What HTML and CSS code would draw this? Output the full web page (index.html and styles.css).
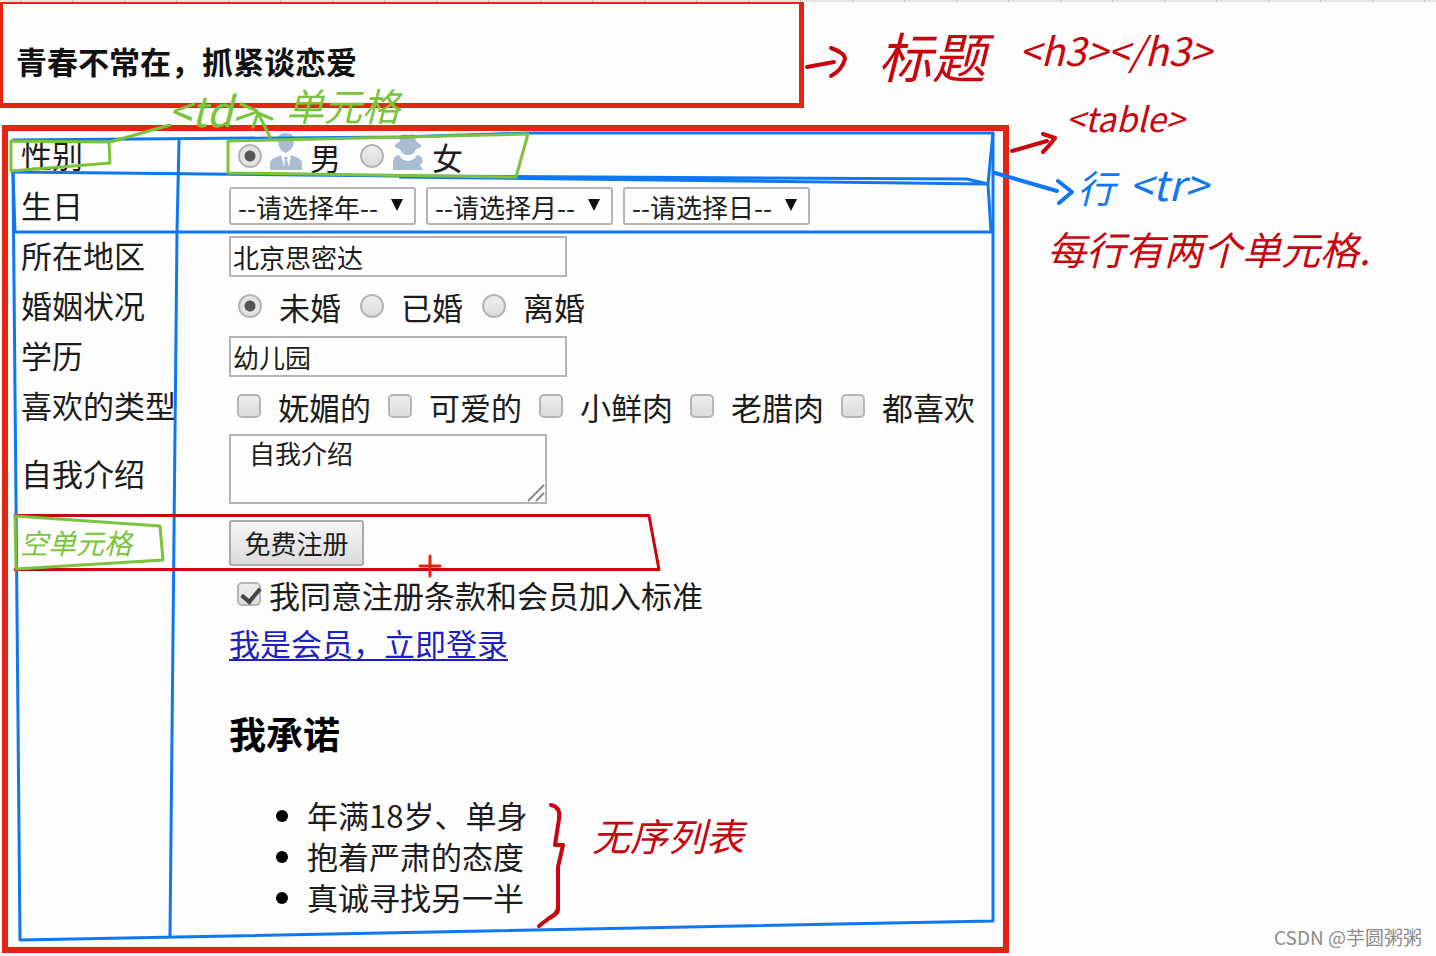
FILE: index.html
```
<!DOCTYPE html>
<html lang="zh-CN">
<head>
<meta charset="utf-8">
<title>青春不常在，抓紧谈恋爱</title>
<link rel="stylesheet" href="styles.css">
</head>
<body>
<div class="ruler"></div>
<header class="title-box"><h3 class="title">青春不常在，抓紧谈恋爱</h3></header>
<main class="sheet">
<form>
<table class="form-table">
<tr class="row">
  <td class="name">性别</td>
  <td class="field"><div class="options">
    <label class="option with-icon"><input class="radio" type="radio" name="sex" checked>
      <svg class="person" viewBox="0 0 32 38" aria-hidden="true"><path d="M8 5Q9 0 16 0Q24 0 24 7Q24 14 19 18L16 20L12 18Q8 14 8 5Z"/><path d="M0 37V31Q0 26 7 24L11 22L14 34L15 27L14 24H18L17 27L19 34L21 22L26 24Q32 26 32 31V37Z"/></svg>男</label>
    <label class="option with-icon"><input class="radio" type="radio" name="sex">
      <svg class="person" viewBox="0 0 32 38" aria-hidden="true"><path d="M8 8Q8 1 13 1Q16 3 19 1Q23 0 24 8L29 12Q30 15 24 16Q22 22 16 22Q10 22 8 16Q2 15 3 12Z"/><path d="M1 37V29Q1 23 7 22Q10 28 16 28Q22 28 25 22Q31 23 31 29L28 32L31 37Z"/></svg>女</label>
  </div></td>
</tr>
<tr class="row">
  <td class="name">生日</td>
  <td class="field"><div class="selects">
    <span class="pick"><select aria-label="年"><option>--请选择年--</option></select></span>
    <span class="pick"><select aria-label="月"><option>--请选择月--</option></select></span>
    <span class="pick"><select aria-label="日"><option>--请选择日--</option></select></span>
  </div></td>
</tr>
<tr class="row">
  <td class="name"><label for="area">所在地区</label></td>
  <td class="field"><input class="text" id="area" type="text" value="北京思密达"></td>
</tr>
<tr class="row">
  <td class="name">婚姻状况</td>
  <td class="field"><div class="options">
    <label class="option"><input class="radio" type="radio" name="marriage" checked>未婚</label>
    <label class="option"><input class="radio" type="radio" name="marriage">已婚</label>
    <label class="option"><input class="radio" type="radio" name="marriage">离婚</label>
  </div></td>
</tr>
<tr class="row">
  <td class="name"><label for="edu">学历</label></td>
  <td class="field"><input class="text" id="edu" type="text" value="幼儿园"></td>
</tr>
<tr class="row">
  <td class="name">喜欢的类型</td>
  <td class="field"><div class="options checks">
    <label class="option"><input class="check" type="checkbox">妩媚的</label>
    <label class="option"><input class="check" type="checkbox">可爱的</label>
    <label class="option"><input class="check" type="checkbox">小鲜肉</label>
    <label class="option"><input class="check" type="checkbox">老腊肉</label>
    <label class="option"><input class="check" type="checkbox">都喜欢</label>
  </div></td>
</tr>
<tr class="row tall">
  <td class="name"><label for="intro">自我介绍</label></td>
  <td class="field"><div class="area"><textarea id="intro">自我介绍</textarea><svg class="grip" viewBox="0 0 18 18" aria-hidden="true"><path d="M1 17L17 1M9 17L17 9"/></svg></div></td>
</tr>
<tr class="row">
  <td class="name"></td>
  <td class="field action"><button class="submit" type="button">免费注册</button></td>
</tr>
<tr class="row">
  <td class="name"></td>
  <td class="field"><div class="options checks"><label class="option agree"><input class="check" type="checkbox" checked>我同意注册条款和会员加入标准</label></div></td>
</tr>
<tr class="row">
  <td class="name"></td>
  <td class="field link-cell"><a class="login" href="#">我是会员，立即登录</a></td>
</tr>
<tr>
  <td class="name"></td>
  <td class="field">
    <h3 class="promise">我承诺</h3>
    <ul class="promises"><li>年满18岁、单身</li><li>抱着严肃的态度</li><li>真诚寻找另一半</li></ul>
  </td>
</tr>
</table>
</form>
</main>

<div class="notes">
<svg class="ink" width="1436" height="956" viewBox="0 0 1436 956" aria-hidden="true">
  <g class="blue">
    <path d="M13 140L400 137L530 133H993V921L20 940L13 172"/>
    <path d="M13 172L400 176L967 179L988 184L400 177"/>
    <path d="M13 172L15 232H991L988 184L993 133M179 141L177 232L170 936"/>
    <path class="thick" d="M995 173L1057 191M1058 181L1072 192L1059 203"/>
  </g>
  <g class="red">
    <path d="M15 515.500H649L659 569.500H15"/>
    <path class="thick" d="M807 67L834 62M831 48Q845 53 845 59Q842 70 831 76"/>
    <path class="thick" d="M1012 151L1047 141M1043 134L1055 138Q1050 145 1043 152"/>
    <path class="thick" d="M551 805Q561 807 559 819L555 845L563 845L558 867V910Q558 914 549 918M549 918"/>
    <path class="thick" d="M558 908Q557 914 548 919L539 926"/>
  </g>
  <path class="cross" d="M430 556V576M420 566H440"/>
  <g class="green">
    <path d="M11 141L109 142L110 163L11 171Z"/>
    <path d="M110 142L170 125"/>
    <path d="M228 141L528 134L516 177L228 173Z"/>
    <path d="M270 137L258 113M253 127L258 113L272 119"/>
    <path d="M15 516L160 526L163 560L16 569Z"/>
  </g>
</svg>
<span class="note green-text note-td">&lt;td&gt;</span>
<span class="note green-text note-cell">单元格</span>
<span class="note note-heading">标题</span>
<span class="note note-h3">&lt;h3&gt;&lt;/h3&gt;</span>
<span class="note note-table">&lt;table&gt;</span>
<span class="note blue-text note-row">行</span>
<span class="note blue-text note-tr">&lt;tr&gt;</span>
<span class="note note-cells">每行有两个单元格.</span>
<span class="note green-text note-empty">空单元格</span>
<span class="note note-list">无序列表</span>
</div>
<footer class="credit">CSDN @芋圆粥粥</footer>
</body>
</html>
```
FILE: styles.css
```
* { box-sizing: border-box; }
body {
  position: relative;
  margin: 0;
  min-height: 100vh;
  background: #fdfdfd;
  color: #1c1c1c;
  font: 31px/41px "Noto Sans CJK SC", sans-serif;
}
.ruler {
  height: 2px;
  background: repeating-linear-gradient(90deg, #e4e6de 0 20px, #b4b8ac 20px 21px, #e4e6de 21px 52px);
}
.title-box {
  width: 56%;
  border: 5px solid #e62412;
  border-width: 2px 5px 5px 3px;
  padding: 38px 13px 23px;
}
.title { margin: 0; font-size: 31px; line-height: 38px; color: #111; }
.sheet {
  width: fit-content;
  margin: 17px 0 0 2px;
  border: 6px solid #e62412;
}
.form-table { border-collapse: collapse; }
.form-table td { padding: 0; }
.row { height: 50px; }
.row.tall { height: 86px; }
.form-table .name { width: 208px; min-width: 208px; padding: 0 0 4px 13px; }
.form-table .field { padding: 0 28px 0 13px; }
.form-table .link-cell { padding-bottom: 4px; }
.options { display: flex; align-items: center; gap: 19px; padding-left: 9px; }
.option { display: flex; align-items: center; gap: 17px; white-space: nowrap; }
.with-icon { gap: 8px; }
.checks { gap: 17px; padding-left: 8px; }
.agree { gap: 8px; }
.person { width: 32px; height: 38px; margin-top: -9px; fill: #a9bdd2; }
.radio, .check {
  appearance: none;
  flex: none;
  width: 24px;
  height: 24px;
  margin: 0;
  border: 2px solid #b5b5b5;
  background: linear-gradient(#eee, #dcdcdc);
}
.radio { border-radius: 50%; }
.check { border-radius: 5px; }
.radio:checked { background: radial-gradient(circle, #555 0 5px, #e4e4e4 6px); }
.check:checked { position: relative; }
.check:checked::after {
  content: "";
  position: absolute;
  left: 6px;
  top: 0;
  width: 8px;
  height: 15px;
  border: solid #444;
  border-width: 0 4px 4px 0;
  transform: rotate(40deg);
}
.selects { display: flex; gap: 10px; }
.pick { position: relative; }
.pick::after {
  content: "";
  position: absolute;
  right: 13px;
  top: 12px;
  border: solid transparent;
  border-width: 12px 6px 0;
  border-top-color: #111;
}
.pick select {
  appearance: none;
  display: block;
  width: 187px;
  height: 38px;
  padding: 2px 0 0 7px;
  border: 2px solid #b4b4b4;
  border-radius: 3px;
  background: #fefefe;
  color: #1c1c1c;
  font: 26px/32px "Noto Sans CJK SC", sans-serif;
}
.text {
  display: block;
  width: 338px;
  height: 41px;
  padding: 2px;
  border: 2px solid #b4b4b4;
  background: #fefefe;
  color: #1c1c1c;
  font: 26px/34px "Noto Sans CJK SC", sans-serif;
}
.area { position: relative; width: 318px; margin-bottom: 10px; }
.area textarea {
  display: block;
  width: 318px;
  height: 70px;
  padding: 0 18px;
  border: 2px solid #b4b4b4;
  background: #fefefe;
  color: #1c1c1c;
  resize: none;
  overflow: hidden;
  font: 26px/34px "Noto Sans CJK SC", sans-serif;
}
.grip { position: absolute; right: 2px; bottom: 2px; width: 18px; height: 18px; fill: none; stroke: #888; stroke-width: 2; }
.form-table .action { padding-top: 3px; padding-bottom: 3px; }
.submit {
  display: block;
  width: 135px;
  height: 46px;
  padding: 0;
  border: 2px solid #aaa;
  border-radius: 3px;
  background: linear-gradient(#f6f6f6, #dcdcdc);
  color: #1c1c1c;
  font: 26px/40px "Noto Sans CJK SC", sans-serif;
}
.login { color: #1f1fc4; text-decoration-thickness: 2px; text-underline-offset: 3px; }
.promise { margin: 39px 0 36px; font-size: 37px; line-height: 50px; color: #000; }
.promises { margin: 0; padding: 0 0 30px 78px; }
.promises li::marker { color: #000; }
.notes { position: absolute; inset: 0; overflow: hidden; pointer-events: none; }
.ink { display: block; fill: none; stroke-width: 3; stroke-linecap: round; stroke-linejoin: round; }
.blue { stroke: #0f78f0; }
.red { stroke: #c8060e; }
.green { stroke: #7ac43c; }
.thick { stroke-width: 4; }
.cross { stroke: #e62412; stroke-width: 3; }
.note {
  position: absolute;
  color: #c8060e;
  font-style: italic;
  white-space: nowrap;
  line-height: 1;
}
.green-text { color: #7ac43c; }
.blue-text { color: #0f78f0; }
.note-td { left: 168px; top: 88px; font-size: 42px; }
.note-cell { left: 286px; top: 86px; font-size: 38px; }
.note-heading { left: 878px; top: 28px; font-size: 54px; }
.note-h3 { left: 1019px; top: 30px; font-size: 39px; }
.note-table { left: 1066px; top: 101px; font-size: 34px; }
.note-row { left: 1077px; top: 168px; font-size: 38px; }
.note-tr { left: 1129px; top: 162px; font-size: 42px; }
.note-cells { left: 1047px; top: 229px; font-size: 39px; }
.note-empty { left: 20px; top: 528px; font-size: 28px; }
.note-list { left: 592px; top: 816px; font-size: 38px; }
.credit {
  position: absolute;
  right: 14px;
  bottom: 6px;
  color: #8c8c8c;
  font-size: 19px;
  line-height: 26px;
}
```
